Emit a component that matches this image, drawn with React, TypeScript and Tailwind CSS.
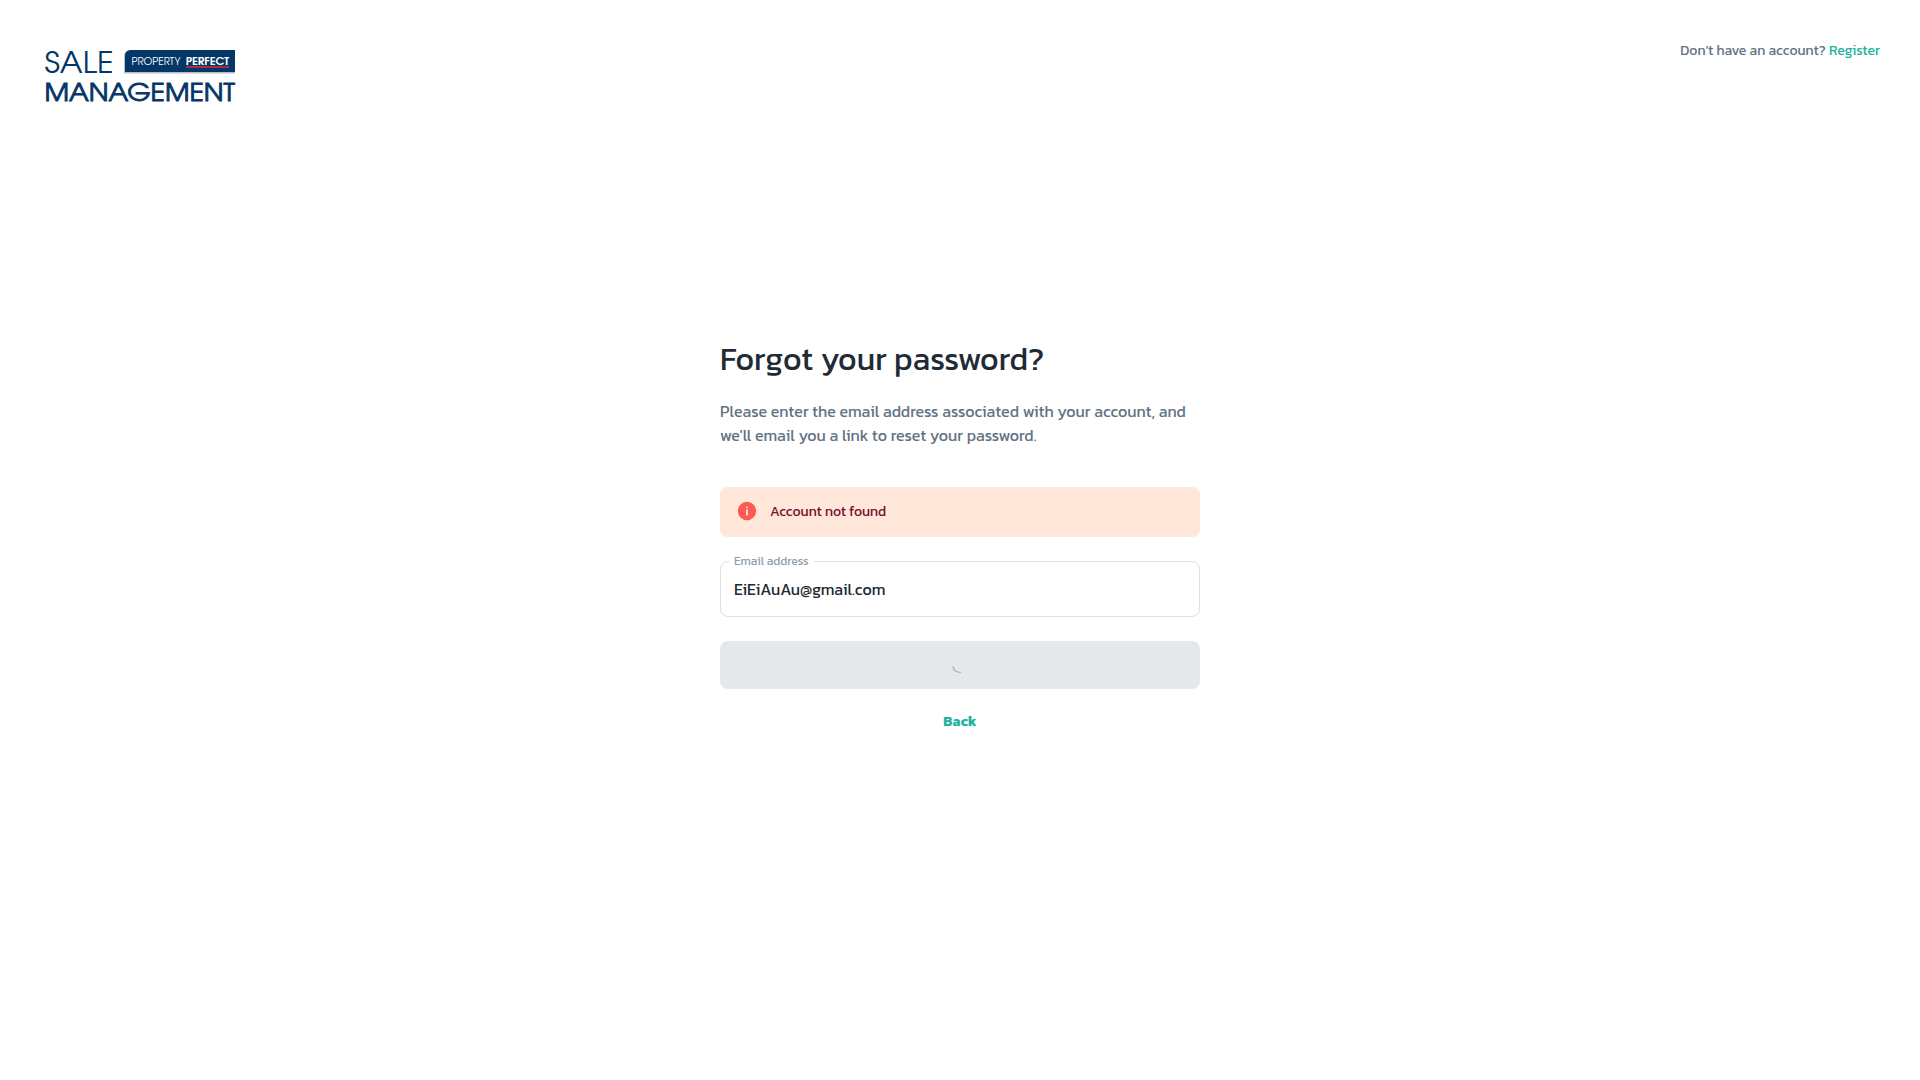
function Logo() {
  return (
    <svg width="194" height="60" viewBox="0 0 194 60" className="block overflow-visible" role="img" aria-label="Sale Management">
      <g fill="#043667" fontFamily="'TeX Gyre Adventor', Lato, sans-serif" fontWeight="400">
        <text x="-0.500" y="24.500" fontSize="29.500" textLength="69" lengthAdjust="spacingAndGlyphs">SALE</text>
        <text x="-0.500" y="53" fontSize="24.600" stroke="#043667" strokeWidth="0.800" textLength="190.500" lengthAdjust="spacingAndGlyphs">MANAGEMENT</text>
      </g>
      <path d="M79 25.500V8a6 6 0 0 1 6-6h105v23.500z" fill="#b9c0c6" />
      <path d="M80 24V7.500a5.500 5.500 0 0 1 5.500-5.500h104.500v22z" fill="#043667" />
      <g fill="#fff" fontFamily="'TeX Gyre Adventor', Lato, sans-serif">
        <text x="86.500" y="16.500" fontSize="9.800" textLength="49" lengthAdjust="spacingAndGlyphs">PROPERTY</text>
        <text x="140.700" y="16.500" fontSize="9.800" fontWeight="700" textLength="43.300" lengthAdjust="spacingAndGlyphs">PERFECT</text>
      </g>
      <path d="M141 19h43" stroke="#e0282e" strokeWidth="1.400" />
    </svg>
  );
}

export default function App() {
  return (
    <div className="flex h-screen flex-col bg-white font-[Kanit,Roboto,sans-serif] text-[#212b36]">
      <header className="flex h-[120px] items-start justify-between pr-10 pl-[45px]">
        <div className="pt-12">
          <Logo />
        </div>
        <p className="pt-10 text-sm leading-[22px] text-[#637381]">
          Don’t have an account? <a className="text-[#22b39d]">Register</a>
        </p>
      </header>
      <main className="mx-auto w-[480px] pt-[215px]">
        <h1 className="text-[32px] leading-[48px] font-normal">Forgot your password?</h1>
        <p className="mt-4 text-base leading-6 text-[#637381]">
          Please enter the email address associated with your account, and we'll email you a link to reset your password.
        </p>
        <div className="mt-10 flex h-[50px] gap-3 rounded-lg bg-[#ffe7d9] px-4 py-[13px] text-sm leading-6 text-[#7a0c2e]">
          <svg width="22" height="22" viewBox="0 0 24 24" fill="#ff5a52">
            <path d="M12 2a10 10 0 1 0 10 10A10 10 0 0 0 12 2zm1 14a1 1 0 0 1-2 0v-5a1 1 0 0 1 2 0zm-1-7a1 1 0 1 1 1-1 1 1 0 0 1-1 1z" />
          </svg>
          <span>Account not found</span>
        </div>
        <div className="relative mt-6 flex h-14 items-center rounded-lg border border-[#dce0e4] px-[13px]">
          <label className="absolute top-[-10px] left-2 bg-white px-[5px] text-xs leading-[18px] text-[#919eab]">Email address</label>
          <span className="text-base leading-6">EiEiAuAu@gmail.com</span>
        </div>
        <button className="mt-6 flex h-12 w-full items-center justify-center rounded-lg bg-[#e5e8eb]">
          <svg width="16" height="16" viewBox="0 0 16 16" fill="none">
            <path d="M0.8 9.500A7.300 7.300 0 0 0 9 15.200" stroke="#a9b2bc" strokeWidth="1.300" />
          </svg>
        </button>
        <button className="mt-[9px] h-12 w-full text-sm font-bold tracking-[0.2px] text-[#22b39d]">Back</button>
      </main>
    </div>
  );
}
